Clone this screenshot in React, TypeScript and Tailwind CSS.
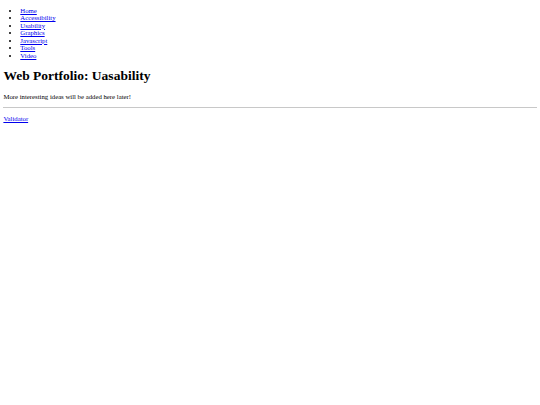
export default function App() {
  const links = ["Home", "Accessibility", "Usability", "Graphics", "Javascript", "Tools", "Video"];
  return (
    <div className="min-h-screen bg-white p-[3.4px] text-black font-['Liberation_Serif',serif] text-[6.75px] leading-[normal]">
      <ul className="mt-[3.25px] mb-[6.75px] list-disc pl-[16.9px] leading-[7.5px]">
        {links.map((l) => (
          <li key={l}>
            <a href="#" className="text-[#0000ee] underline">{l}</a>
          </li>
        ))}
      </ul>
      <h1 className="my-[9px] text-[13.5px] font-bold">Web Portfolio: Uasability</h1>
      <p className="my-[6.75px]">More interesting ideas will be added here later!</p>
      <hr className="my-[3.4px] border-t border-[#c8c8c8]" />
      <p className="my-[6.75px]">
        <a href="#" className="text-[#0000ee] underline">Validator</a>
      </p>
    </div>
  );
}
